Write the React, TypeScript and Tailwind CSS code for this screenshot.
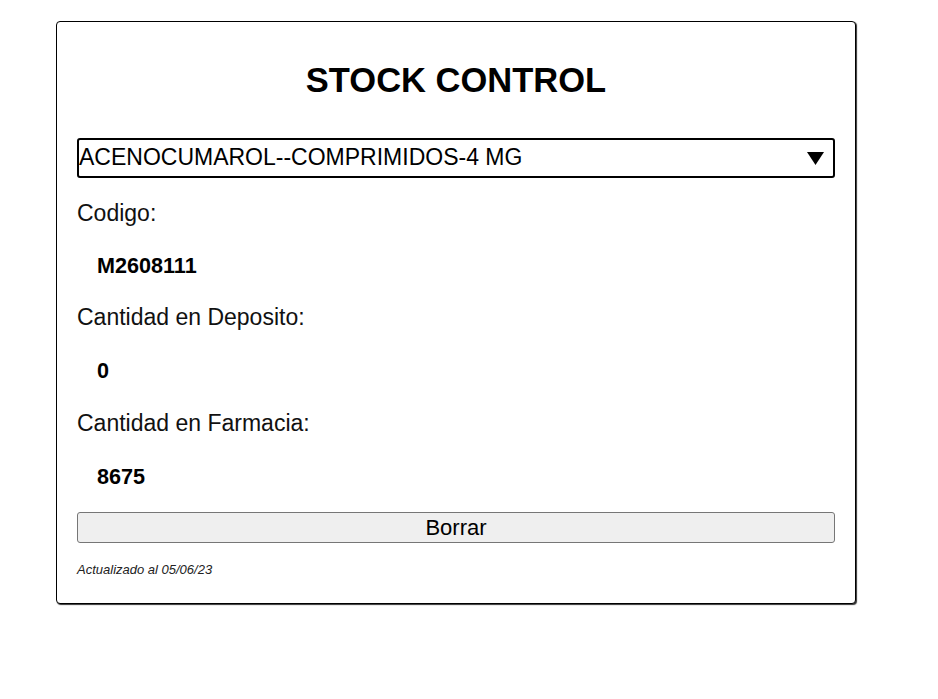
import React from "react";

const font = { fontFamily: '"Liberation Sans", Arial, sans-serif' };

function Field({ label, value, lm, vm }: { label: string; value: string; lm: string; vm: string }) {
  return (
    <>
      <div className={`${lm} text-[23px] leading-[26px] text-[#111]`}>{label}</div>
      <div className={`${vm} pl-[20px] text-[21.6px] leading-[26px] font-bold text-black`}>{value}</div>
    </>
  );
}

export default function App() {
  return (
    <div className="min-h-[699px] bg-white pt-[21px] pl-[56px]" style={font}>
      <div className="w-[800px] rounded-[4px] border border-black bg-white px-[20px] pt-[38px] pb-[26px] shadow-[1px_1px_1px_rgba(0,0,0,0.8)]">
        <h1 className="text-center text-[34.5px] leading-[40px] font-bold text-black">STOCK CONTROL</h1>
        <div className="mt-[38px] flex h-[40px] items-center justify-between rounded-[3px] border-2 border-black pb-[2px] pr-[9px]">
          <span className="text-[23px] leading-[26px] text-black">ACENOCUMAROL--COMPRIMIDOS-4 MG</span>
          <svg width="17" height="13" viewBox="0 0 17 13" className="mt-[2px]">
            <polygon points="0,0 17,0 8.5,13" fill="#000" />
          </svg>
        </div>
        <Field label="Codigo:" value="M2608111" lm="mt-[22px]" vm="mt-[27px]" />
        <Field label="Cantidad en Deposito:" value="0" lm="mt-[25px]" vm="mt-[28px]" />
        <Field label="Cantidad en Farmacia:" value="8675" lm="mt-[26px]" vm="mt-[28px]" />
        <button className="mt-[22px] flex h-[31px] w-full items-center justify-center rounded-[3px] border border-[#767676] bg-[#efefef] text-[22px] leading-[26px] text-black">
          Borrar
        </button>
        <div className="mt-[19px] text-[13px] leading-[15px] italic text-[#222]">Actualizado al 05/06/23</div>
      </div>
    </div>
  );
}
